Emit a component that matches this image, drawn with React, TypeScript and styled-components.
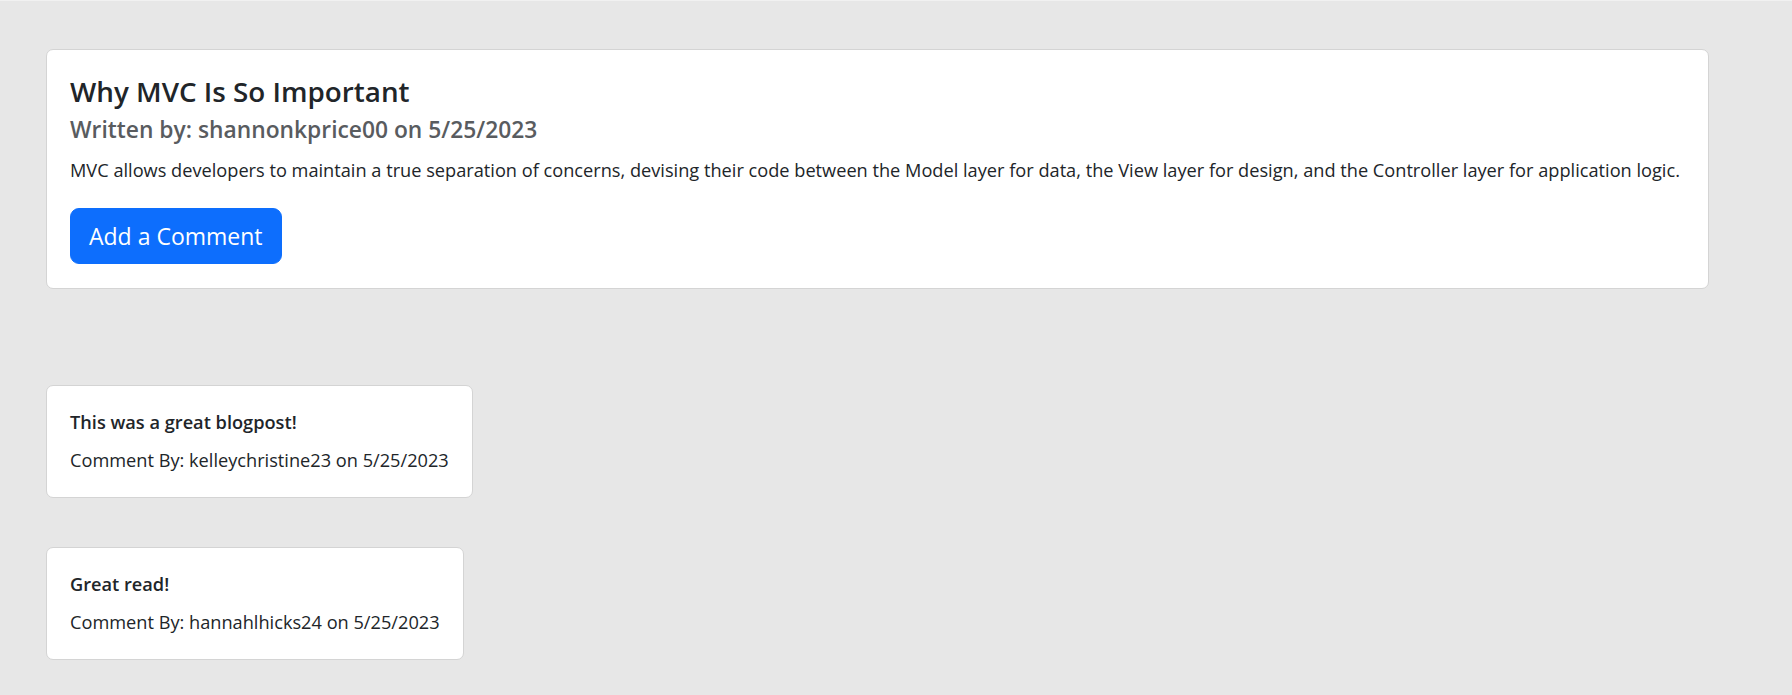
import React from "react";
import styled, { createGlobalStyle } from "styled-components";

const GlobalStyle = createGlobalStyle`
  html, body {
    margin: 0;
    padding: 0;
    background: #e7e7e7;
  }
  body {
    font-family: "Open Sans", "Noto Sans", "Liberation Sans", sans-serif;
    color: #212529;
  }
  * { box-sizing: border-box; }
`;

const Page = styled.main`
  min-height: 695px;
  border-top: 1px solid #f1f1f1;
  padding: 48px 83px 0 46px;
  display: flex;
  flex-direction: column;
  align-items: flex-start;
`;

const PostCard = styled.article`
  align-self: stretch;
  background: #fff;
  border: 1px solid #d4d4d4;
  border-radius: 7px;
  padding: 23px 23px 24px;
  display: flex;
  flex-direction: column;
  align-items: flex-start;
`;

const Title = styled.h1`
  margin: 0;
  font-size: 27.8px;
  font-weight: 600;
  line-height: 36px;
  color: #212529;
`;

const Byline = styled.h2`
  margin: 6px 0 0;
  font-size: 22.8px;
  font-weight: 600;
  line-height: 30px;
  color: #595c5f;
`;

const Body = styled.p`
  margin: 11px 0 24px;
  font-size: 18.2px;
  line-height: 28px;
`;

const Button = styled.button`
  font-family: inherit;
  font-size: 23px;
  line-height: 34px;
  color: #fff;
  background: #0d6efd;
  border: 1px solid #0d6efd;
  border-radius: 9px;
  padding: 10px 18px;
  cursor: pointer;
`;

const Comments = styled.section`
  margin-top: 96px;
  display: flex;
  flex-direction: column;
  align-items: flex-start;
  gap: 49px;
`;

const CommentCard = styled.article`
  background: #fff;
  border: 1px solid #d4d4d4;
  border-radius: 7px;
  padding: 24px 23px 23px 23px;
  display: flex;
  flex-direction: column;
  gap: 12px;
`;

const CommentText = styled.p`
  margin: 0;
  font-size: 18.2px;
  font-weight: 600;
  line-height: 24px;
`;

const CommentMeta = styled.p`
  margin: 0;
  font-size: 18.2px;
  line-height: 28px;
`;

const comments = [
  { text: "This was a great blogpost!", user: "kelleychristine23", date: "5/25/2023" },
  { text: "Great read!", user: "hannahlhicks24", date: "5/25/2023" },
];

export default function App() {
  return (
    <>
      <GlobalStyle />
      <Page>
        <PostCard>
          <Title>Why MVC Is So Important</Title>
          <Byline>Written by: shannonkprice00 on 5/25/2023</Byline>
          <Body>
            MVC allows developers to maintain a true separation of concerns, devising their code between the Model
            layer for data, the View layer for design, and the Controller layer for application logic.
          </Body>
          <Button type="button">Add a Comment</Button>
        </PostCard>
        <Comments>
          {comments.map((c) => (
            <CommentCard key={c.user}>
              <CommentText>{c.text}</CommentText>
              <CommentMeta>
                Comment By: {c.user} on {c.date}
              </CommentMeta>
            </CommentCard>
          ))}
        </Comments>
      </Page>
    </>
  );
}
